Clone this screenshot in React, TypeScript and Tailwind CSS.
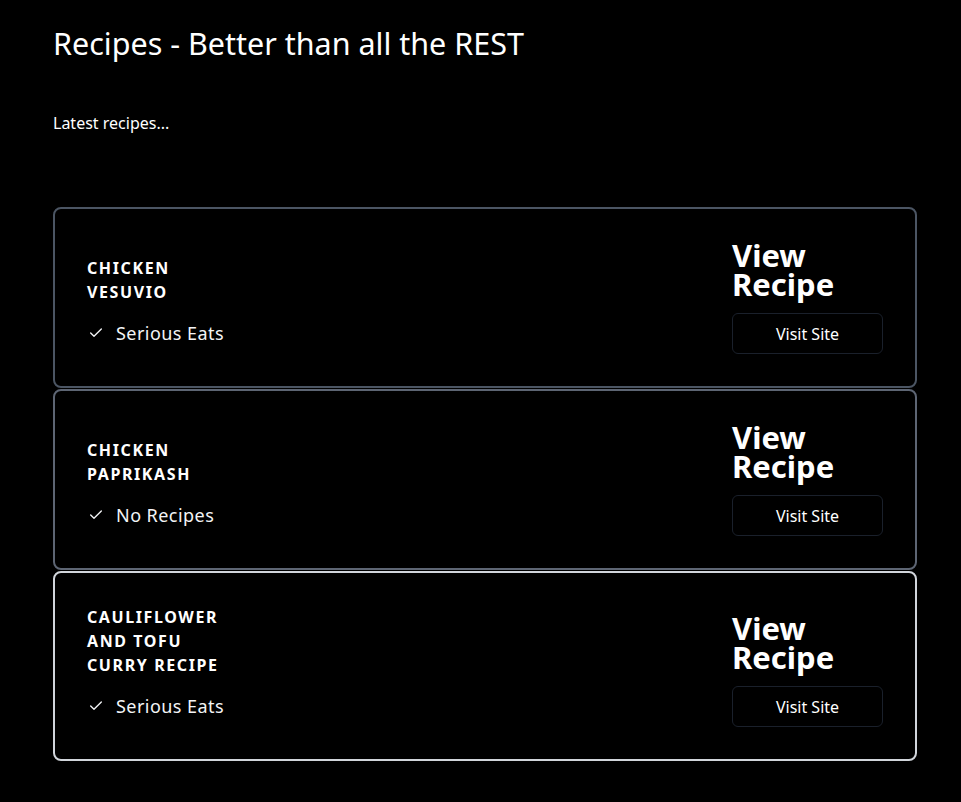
import React from "react";
import { Check } from "lucide-react";

type Recipe = {
  title: string[];
  source: string;
  border: string;
};

const recipes: Recipe[] = [
  { title: ["Chicken", "Vesuvio"], source: "Serious Eats", border: "border-[#4b5563]" },
  { title: ["Chicken", "Paprikash"], source: "No Recipes", border: "border-[#5d6573]" },
  { title: ["Cauliflower", "and Tofu", "Curry Recipe"], source: "Serious Eats", border: "border-[#d1d5db]" },
];

const RecipeCard: React.FC<{ recipe: Recipe }> = ({ recipe }) => {
  return (
    <div className={`flex items-end justify-between rounded-lg border-2 ${recipe.border} bg-black p-8`}>
      {/* Left: name + source */}
      <div className="flex flex-col">
        <h2 className="text-base leading-6 font-bold uppercase tracking-[0.1em] text-white">
          {recipe.title.map((line) => (
            <div key={line}>{line}</div>
          ))}
        </h2>
        <div className="mt-[15px] pb-[7px] flex items-center gap-3 text-[18px] leading-7 tracking-[0.025em] text-gray-100">
          <Check className="ml-px w-4 h-4" strokeWidth={2} />
          <span>{recipe.source}</span>
        </div>
      </div>

      {/* Right: view + visit */}
      <div className="flex w-[151px] flex-col">
        <div className="h-[58px] text-[31px] leading-[29px] font-bold text-white">
          View
          <br />
          Recipe
        </div>
        <button className="mt-[14px] h-[41px] w-full rounded-md border border-[#1a202b] bg-black text-base text-white">
          Visit Site
        </button>
      </div>
    </div>
  );
};

const App: React.FC = () => {
  return (
    <div className="min-h-screen bg-black text-white font-['Noto_Sans',sans-serif]">
      <div className="pl-[53px] pt-[25px] pb-10">
        <h1 className="text-[30.5px] leading-9 font-normal">Recipes - Better than all the REST</h1>
        <p className="mt-[50px] text-base leading-6">Latest recipes...</p>

        <div className="mt-[72px] flex w-[864px] flex-col gap-px">
          {recipes.map((r) => (
            <RecipeCard key={r.title.join(" ")} recipe={r} />
          ))}
        </div>
      </div>
    </div>
  );
};

export default App;
